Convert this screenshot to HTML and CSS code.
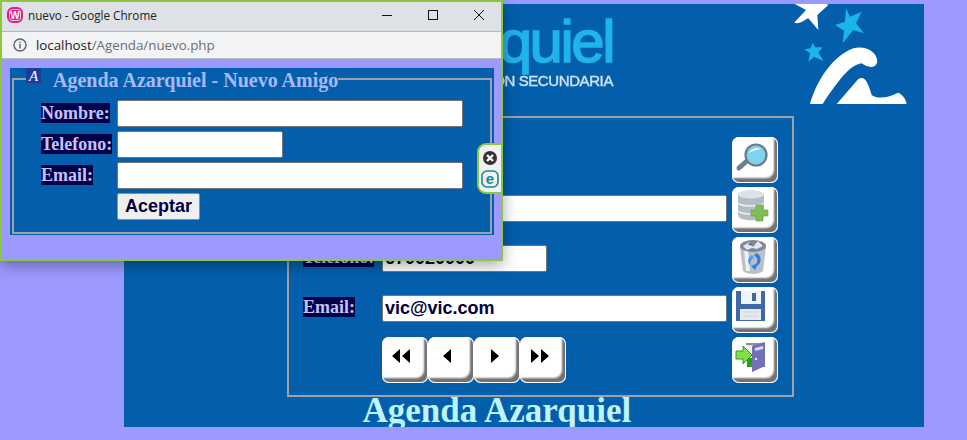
FILE: index.html
```html
<!DOCTYPE html>
<html lang="es">
<head>
<meta charset="utf-8">
<title>Agenda Azarquiel</title>
<link rel="stylesheet" href="styles.css">
</head>
<body>
<main class="panel">
  <header class="banner">
    <div class="logo">
      <div class="logo-name">Azarquiel</div>
      <div class="logo-sub">EDUCACION SECUNDARIA</div>
    </div>
    <svg class="stars" viewBox="0 0 375 300" width="125" height="100" aria-hidden="true">
      <path fill="#fff" d="M14 0 L48 18 L12 56 C30 62 42 48 55 43 L85 78 L82 33 L115 3 L110 0 Z"/>
      <path fill="#19b5ec" d="M168 13 L180 38 L215 23 L198 58 L222 88 L190 78 L158 118 L162 80 L135 63 L165 53 Z"/>
      <path fill="#19b5ec" d="M68 116 L75 130 L98 130 L85 145 L100 171 L72 158 L55 173 L60 148 L43 136 L62 133 Z"/>
      <path fill="#fff" d="M60 300 C75 248 115 163 190 133 C225 123 262 143 262 173 C258 193 235 193 215 178 C180 183 150 223 98 300 Z"/>
      <path fill="#fff" d="M140 300 L205 225 C225 213 235 238 245 273 C265 288 300 278 325 266 C340 273 348 288 350 300 Z"/>
    </svg>
  </header>

  <section class="record">
    <span></span><span></span>
    <button class="key" type="button" aria-label="Buscar">
      <svg viewBox="0 0 46 46" width="46" height="46">
        <path d="M7 31 L16 23" stroke="#6d7f8c" stroke-width="5" stroke-linecap="round"/>
        <circle cx="24" cy="18" r="10.5" fill="#7fd3ea" stroke="#6b7c88" stroke-width="2.2"/>
        <path d="M17 16 C19 11 25 10 29 12 C25 13 20 14 17 16 Z" fill="#e6f8fd"/>
      </svg>
    </button>

    <label class="field-label"><span>Nombre:</span></label>
    <input class="field" type="text" value="Victor">
    <button class="key" type="button" aria-label="Nuevo">
      <svg viewBox="0 0 46 46" width="46" height="46">
        <path d="M6 8 C6 2 32 2 32 8 V28 C32 35 6 35 6 28 Z" fill="#b4bcc6"/>
        <ellipse cx="19" cy="7.5" rx="13" ry="4" fill="#dde2e8"/>
        <path d="M6 16 C10 20 28 20 32 16 M6 24 C10 28 28 28 32 24" fill="none" stroke="#eef1f4" stroke-width="1.4"/>
        <path d="M24 18 H31 V23 H36 V29 H31 V34 H24 V29 H19 V23 H24 Z" fill="#7fbf55" stroke="#5f9c3a" stroke-width=".6"/>
      </svg>
    </button>

    <label class="field-label"><span>Telefono:</span></label>
    <input class="field field-short" type="text" value="670020000">
    <button class="key" type="button" aria-label="Borrar">
      <svg viewBox="0 0 46 46" width="46" height="46">
        <path d="M8 10 L11 34 C15 38 27 38 31 34 L34 10 Z" fill="#b9c0c8"/>
        <path d="M12 12 L14 34 H18 L16 12 Z" fill="#eef0f3"/>
        <ellipse cx="21" cy="9" rx="13" ry="6" fill="#7f8890"/>
        <path d="M11 9 L17 5 L21 10 L26 4 L31 9 L25 12 L20 11 L15 13 Z" fill="#dfe8f2"/>
        <path d="M15 7 L19 6 L20 9 Z" fill="#4d6fb3"/>
        <path d="M24 16 C30 18 30 26 25 29 L23 33 L19 29 L24 27 C26 24 26 20 22 19 Z" fill="#2f7fe0"/>
        <path d="M20 18 L22 21 C18 23 18 27 19 29 C15 26 15 21 20 18 Z" fill="#4f9ae8"/>
      </svg>
    </button>

    <label class="field-label"><span>Email:</span></label>
    <input class="field" type="text" value="vic@vic.com">
    <button class="key" type="button" aria-label="Guardar">
      <svg viewBox="0 0 46 46" width="46" height="46">
        <path d="M4 4 H33 V34 H4 Z" fill="#3f68a8"/>
        <rect x="9" y="4" width="20" height="13" fill="#f0f3f8"/>
        <rect x="20" y="6" width="4" height="8" fill="#3f68a8"/>
        <rect x="8" y="22" width="21" height="11" fill="#e6e9ee"/>
        <path d="M11 25 H26 M11 29 H26" stroke="#cfd5dc"/>
      </svg>
    </button>

    <span></span>
    <div class="nav">
      <button class="key" type="button" aria-label="Primero">
        <svg viewBox="0 0 46 46" width="46" height="46"><path d="M18 12 V26 L10 19 Z M28 12 V26 L20 19 Z"/></svg>
      </button>
      <button class="key" type="button" aria-label="Anterior">
        <svg viewBox="0 0 46 46" width="46" height="46"><path d="M23 12 V26 L15 19 Z"/></svg>
      </button>
      <button class="key" type="button" aria-label="Siguiente">
        <svg viewBox="0 0 46 46" width="46" height="46"><path d="M17 12 V26 L25 19 Z"/></svg>
      </button>
      <button class="key" type="button" aria-label="Ultimo">
        <svg viewBox="0 0 46 46" width="46" height="46"><path d="M11 12 V26 L19 19 Z M21 12 V26 L29 19 Z"/></svg>
      </button>
    </div>
    <button class="key" type="button" aria-label="Salir">
      <svg viewBox="0 0 46 46" width="46" height="46">
        <path d="M14 6 H33 V30 H14 Z" fill="#8b8f98"/>
        <rect x="14" y="8" width="7" height="22" fill="#f2f5ee"/>
        <rect x="15" y="21" width="6" height="9" fill="#2f9a1c"/>
        <path d="M20 9 L33 5 V29 L20 35 Z" fill="#7470b5"/>
        <path d="M23 11 L31 9 V12 L23 14 Z" fill="#d9dcf2"/>
        <circle cx="24" cy="22" r="1.2" fill="#e6e6ee"/>
        <path d="M4 14 H11 V9 L20 18 L11 27 V22 H4 Z" fill="#84e04a" stroke="#2f9a1c"/>
      </svg>
    </button>
  </section>

  <h1 class="page-title">Agenda Azarquiel</h1>
</main>

<div class="popup">
  <div class="titlebar">
    <svg class="favicon" viewBox="0 0 16 16" width="16" height="16" aria-hidden="true">
      <rect x="1" y="1" width="14" height="14" rx="5" fill="none" stroke="#f0148c" stroke-width="2"/>
      <rect x="3" y="3" width="10" height="10" rx="2" fill="#f0148c"/>
      <text x="8" y="11.5" text-anchor="middle" class="favicon-letter">W</text>
    </svg>
    <span class="window-title">nuevo - Google Chrome</span>
    <div class="window-controls">
      <svg viewBox="0 0 12 12" width="12" height="12"><path d="M1 6.5 H11" stroke="#111"/></svg>
      <svg viewBox="0 0 12 12" width="12" height="12"><rect x="1.5" y="1.5" width="9" height="9" fill="none" stroke="#111"/></svg>
      <svg viewBox="0 0 12 12" width="12" height="12"><path d="M1 1 L11 11 M11 1 L1 11" stroke="#111"/></svg>
    </div>
  </div>
  <div class="addressbar">
    <svg viewBox="0 0 16 16" width="16" height="16" aria-hidden="true">
      <circle cx="8" cy="8" r="6" fill="none" stroke="#5f6368" stroke-width="1.4"/>
      <path d="M8 7 V11.5 M8 4.4 V5.8" stroke="#5f6368" stroke-width="1.5"/>
    </svg>
    <span class="url"><b>localhost</b>/Agenda/nuevo.php</span>
  </div>
  <div class="popup-body">
    <div class="popup-panel">
      <fieldset class="new-friend">
        <legend>
          <svg class="legend-icon" viewBox="0 0 15 15" width="15" height="15" aria-hidden="true">
            <rect width="15" height="15" fill="#1c3c9c"/>
            <text x="7.5" y="13" text-anchor="middle" class="legend-letter">A</text>
          </svg>
          <span>Agenda Azarquiel - Nuevo Amigo</span>
        </legend>
        <div class="new-grid">
          <label class="new-label"><span>Nombre:</span></label>
          <input class="new-field" type="text">
          <label class="new-label"><span>Telefono:</span></label>
          <input class="new-field new-short" type="text">
          <label class="new-label"><span>Email:</span></label>
          <input class="new-field" type="text">
          <span></span>
          <button class="accept" type="button">Aceptar</button>
        </div>
      </fieldset>
    </div>
  </div>
  <aside class="eset-tab">
    <svg viewBox="0 0 16 16" width="16" height="16" aria-hidden="true">
      <circle cx="8" cy="8" r="7" fill="#333"/>
      <path d="M5 5 L11 11 M11 5 L5 11" stroke="#fff" stroke-width="2.4"/>
    </svg>
    <svg viewBox="0 0 18 18" width="18" height="18" aria-hidden="true">
      <rect x="1" y="1" width="16" height="16" rx="5" fill="none" stroke="#0d8c93" stroke-width="1.6"/>
      <text x="9" y="13.6" text-anchor="middle" class="eset-letter">e</text>
    </svg>
  </aside>
</div>
</body>
</html>
```

FILE: styles.css
```css
* { box-sizing: border-box; }

html, body {
  margin: 0;
  height: 440px;
  overflow: hidden;
}

body {
  background: #9c99ff;
  padding: 4px 0 0 124px;
  font-family: "Liberation Serif", serif;
}

/* main page */
.panel {
  width: 800px;
  height: 423px;
  background: #035fab;
  overflow: hidden;
}

.banner {
  height: 100px;
  display: flex;
  justify-content: space-between;
}

.logo {
  width: 489px;
  text-align: right;
  font-family: "Liberation Sans", sans-serif;
  white-space: nowrap;
  filter: blur(.4px);
}

.logo-name {
  font-size: 60px;
  line-height: 56px;
  margin-top: 10px;
  letter-spacing: -2.5px;
  color: #1fb4ea;
  -webkit-text-stroke: 1.5px #1fb4ea;
}

.logo-sub {
  font-size: 15px;
  line-height: 16px;
  margin-top: 3px;
  letter-spacing: -.4px;
  color: #d3e2ef;
  -webkit-text-stroke: .4px #d3e2ef;
}

.stars {
  margin-right: 9px;
  filter: blur(.3px);
}

.record {
  margin: 12px 0 0 163px;
  width: 507px;
  height: 281px;
  border: 2px solid #9ea2a8;
  padding: 19px 14px 8px;
  display: grid;
  grid-template-columns: 79px 345px 46px;
  grid-auto-rows: 50px;
  align-items: start;
  justify-content: start;
}

.record > .key { margin-left: 5px; }

.field-label {
  margin-top: 10px;
  font-weight: bold;
  font-size: 18px;
  line-height: 20px;
  color: #c5c1ff;
}

.field-label span { background: #000048; display: inline-block; }

.field {
  width: 345px;
  height: 27px;
  margin-top: 8px;
  padding: 0 2px;
  border: 1px solid #767676;
  border-radius: 2px;
  background: #fff;
  color: #000040;
  font: bold 18px "Liberation Sans", sans-serif;
}

.field-short { width: 165px; }

.key {
  width: 46px;
  height: 46px;
  padding: 0;
  border: 0;
  border-radius: 7px;
  background: #fff;
  box-shadow: inset 0 0 0 1px #fff, inset -5px -6px 2px -1px #707275;
  display: block;
}

.key svg { display: block; }

.nav { display: flex; }

.page-title {
  margin: -1px 0 0 238.5px;
  font-size: 35px;
  line-height: 30px;
  font-weight: bold;
  color: #bff3ff;
  white-space: nowrap;
}

/* popup window */
.popup {
  position: absolute;
  left: 0;
  top: 0;
  width: 503px;
  height: 261px;
  display: flex;
  flex-direction: column;
  border: 2px solid #8dc63f;
  box-shadow: 0 4px 14px rgba(0, 0, 0, .35);
  font-family: "Liberation Sans", sans-serif;
}

.titlebar {
  height: 30px;
  flex: none;
  background: #dee1e6;
  display: flex;
  align-items: center;
  padding: 0 0 3px 5px;
  border-bottom: 1px solid #b5b8bb;
}

.favicon { flex: none; }

.favicon-letter {
  font: bold 10px "Liberation Sans", sans-serif;
  fill: #fff;
}

.window-title {
  margin-left: 5px;
  font: 11.7px "Open Sans", sans-serif;
  color: #222;
}

.window-controls {
  margin-left: auto;
  display: flex;
  gap: 34px;
  padding-right: 16px;
}

.addressbar {
  height: 27px;
  flex: none;
  background: #f1f3f4;
  border-bottom: 1px solid #b5b8bb;
  display: flex;
  align-items: center;
  gap: 8px;
  padding-left: 10px;
}

.url {
  font: 13.3px "Open Sans", sans-serif;
  color: #6b7075;
}

.url b { font-weight: normal; color: #222; }

.popup-body {
  flex: 1;
  background: #9c99ff;
  padding: 9px 7px 0 8px;
}

.popup-panel {
  height: 167px;
  background: #035fab;
  padding: 0 2px;
}

.new-friend {
  margin: 0;
  padding: 0;
  height: 166px;
  border: 2px solid #9ea2a8;
  min-width: 0;
}

.new-friend legend {
  padding: 0;
  margin-left: 12px;
  height: 22px;
  display: flex;
  align-items: flex-start;
  font-family: "Liberation Serif", serif;
  font-weight: bold;
  font-size: 20px;
  line-height: 24px;
  color: #a9b7f7;
  white-space: nowrap;
}

.legend-icon { display: block; margin-right: 12px; flex: none; }

.legend-letter {
  font: italic 15px "Liberation Serif", serif;
  fill: #fff;
}

.new-grid {
  display: grid;
  grid-template-columns: 76px 346px;
  grid-auto-rows: 27px;
  row-gap: 4px;
  padding: 10px 0 0 27px;
  align-items: start;
  font-family: "Liberation Serif", serif;
}

.new-label {
  margin-top: 3px;
  font-weight: bold;
  font-size: 18px;
  line-height: 20px;
  color: #c5c1ff;
  white-space: nowrap;
}

.new-label span { background: #000048; display: inline-block; }

.new-field {
  width: 346px;
  height: 27px;
  padding: 0 3px;
  border: 1px solid #767676;
  border-radius: 2px;
  background: #fff;
}

.new-short { width: 166px; }

.accept {
  width: 83px;
  height: 27px;
  padding: 0;
  border: 1px solid #8f8f8f;
  border-radius: 2px;
  background: #efefef;
  color: #000040;
  font: bold 18px "Liberation Sans", sans-serif;
}

.eset-tab {
  position: absolute;
  top: 141px;
  right: -2px;
  width: 26px;
  height: 51px;
  background: #f2f2f2;
  border: 2px solid #8dc63f;
  border-radius: 9px 0 0 9px;
  display: flex;
  flex-direction: column;
  align-items: center;
  justify-content: center;
  gap: 4px;
}

.eset-letter {
  font: bold 15px "Liberation Sans", sans-serif;
  fill: #0d8c93;
}
```
